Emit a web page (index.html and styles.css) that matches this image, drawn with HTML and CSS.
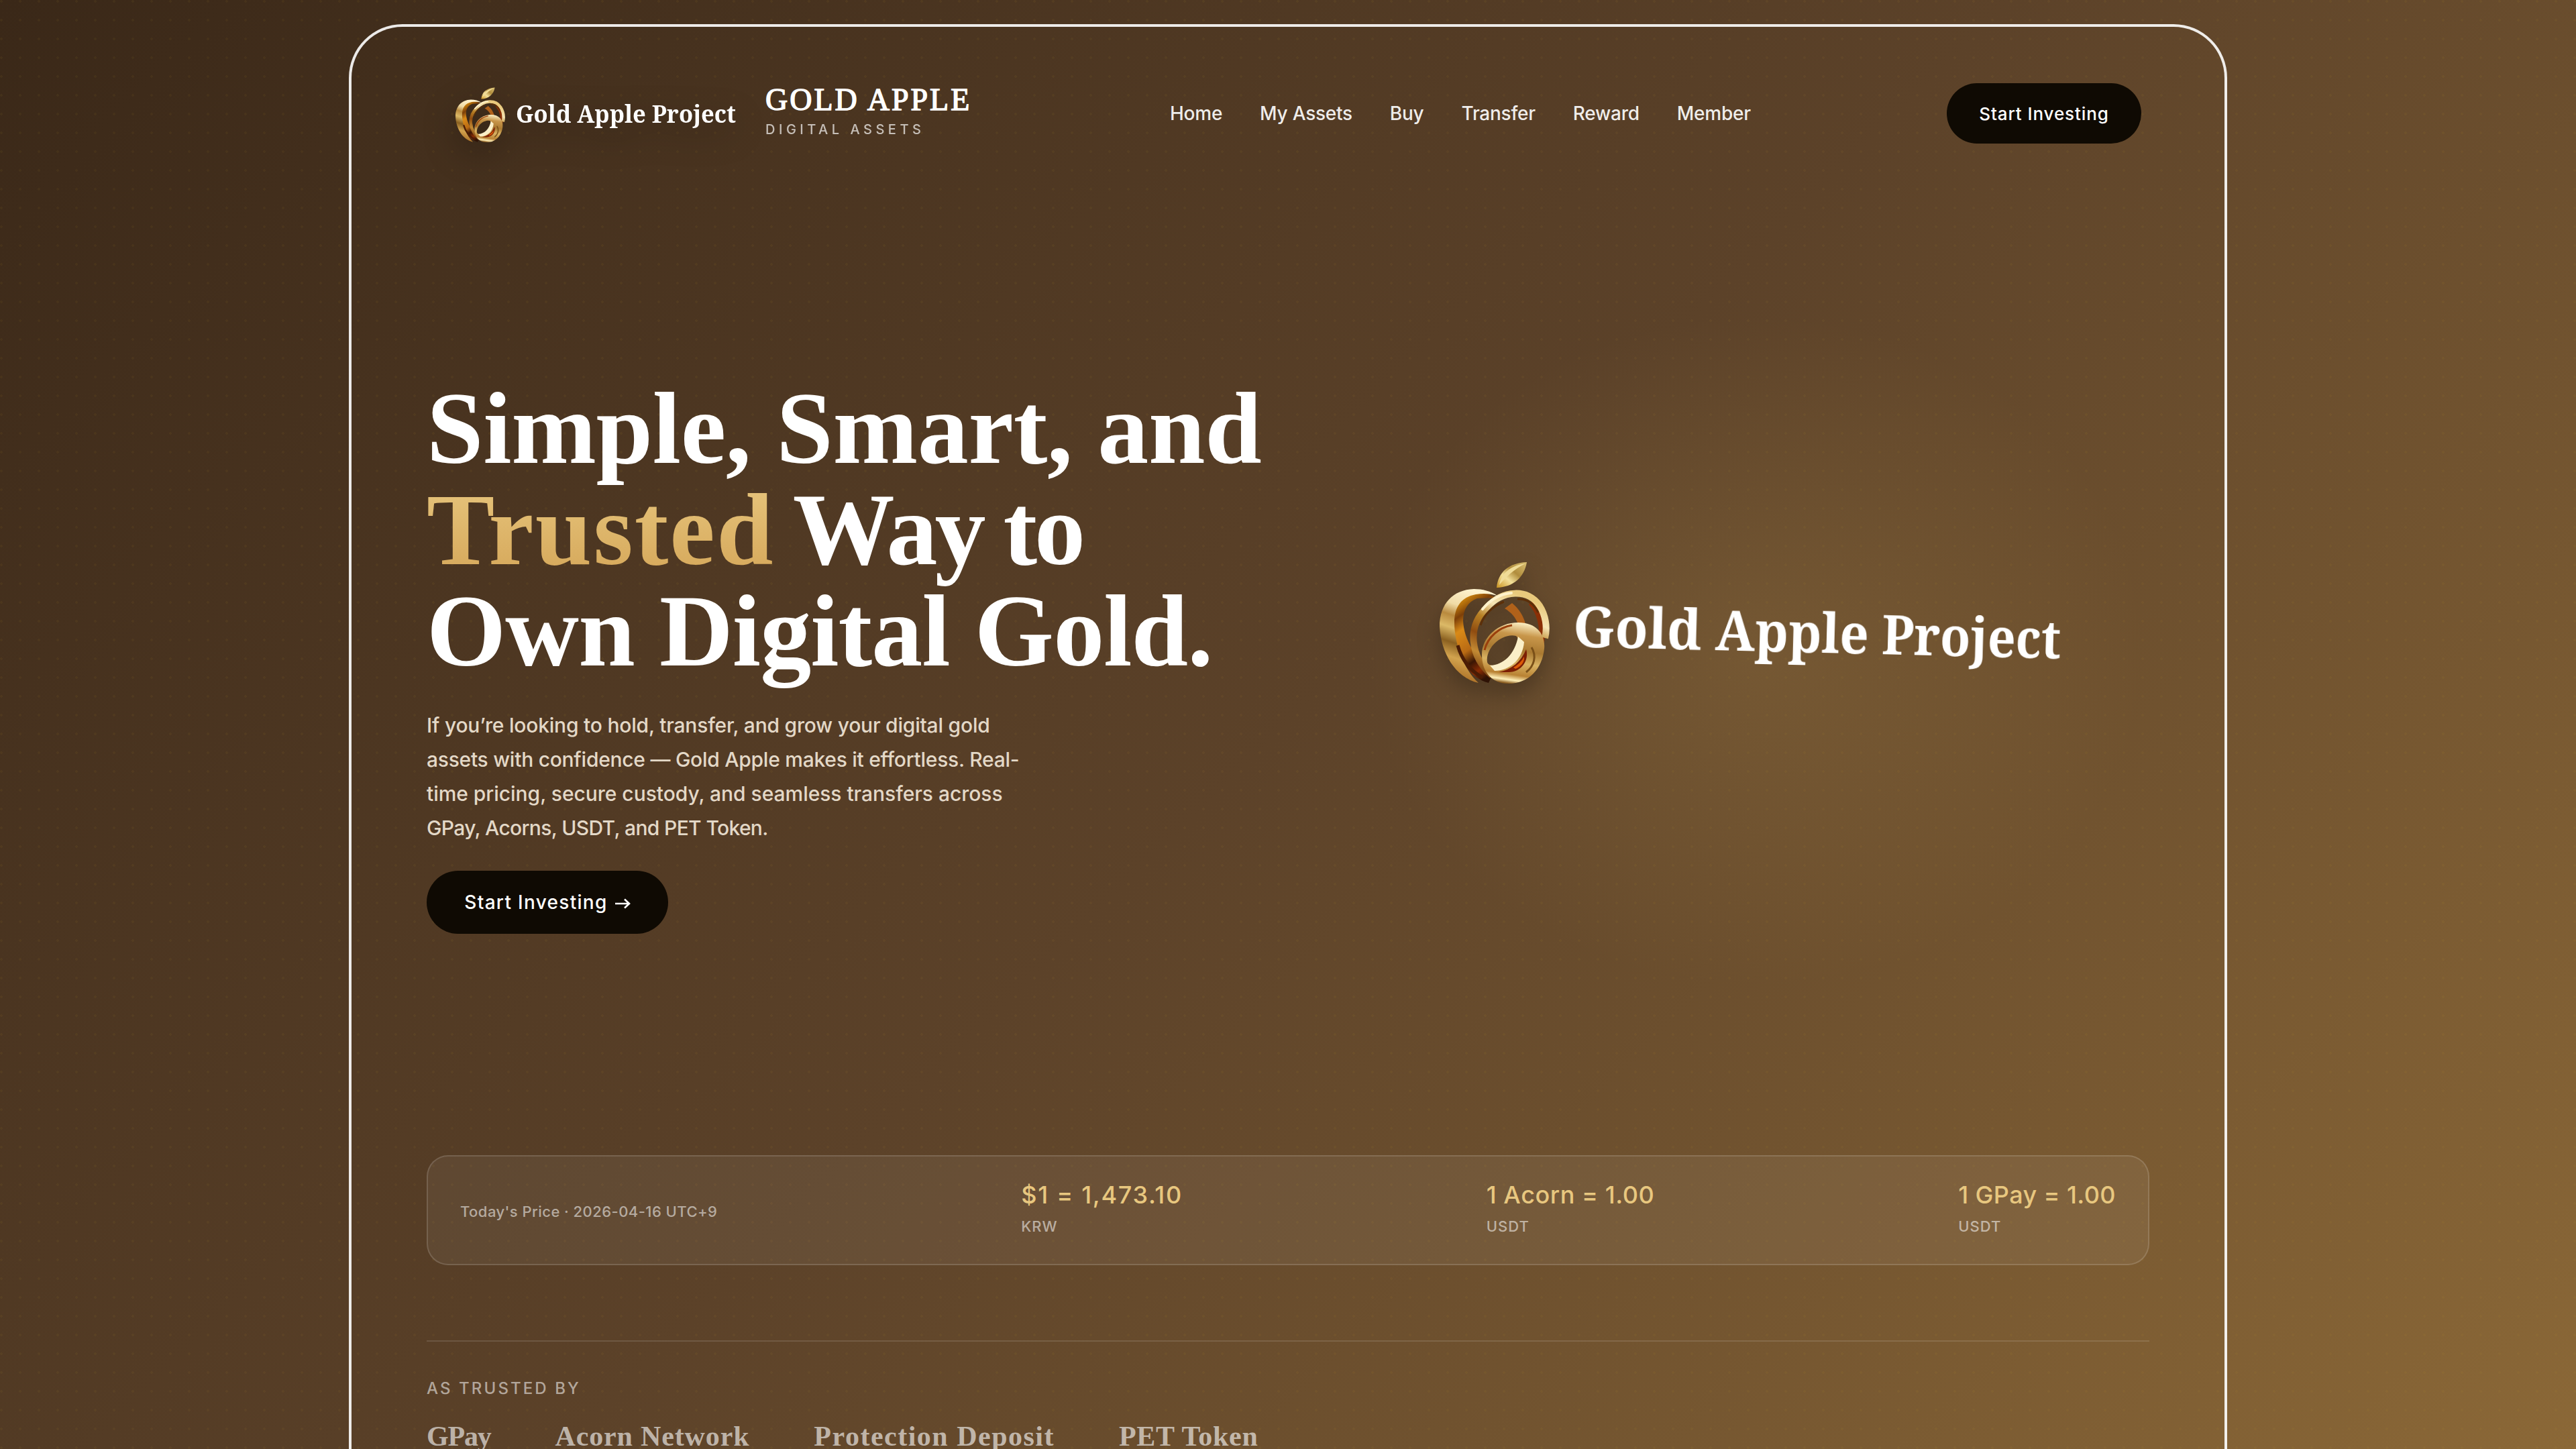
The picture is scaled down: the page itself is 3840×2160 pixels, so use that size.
FILE: index.html
```html
<!DOCTYPE html>
<html lang="en">
<head>
<meta charset="utf-8">
<title>Gold Apple</title>
<link rel="stylesheet" href="styles.css">
</head>
<body>
<svg width="0" height="0" class="defs" aria-hidden="true">
  <defs>
    <linearGradient id="goldLight" x1=".5" y1="0" x2=".3" y2="1">
      <stop offset="0" stop-color="#fff3cf"/><stop offset=".2" stop-color="#f0dba6"/><stop offset=".32" stop-color="#b98a3e"/>
      <stop offset=".45" stop-color="#dcb967"/><stop offset=".6" stop-color="#8a6020"/><stop offset=".75" stop-color="#d2a34e"/><stop offset="1" stop-color="#a5651d"/>
    </linearGradient>
    <linearGradient id="amber" x1=".3" y1="0" x2=".6" y2="1">
      <stop offset="0" stop-color="#e69a10"/><stop offset=".2" stop-color="#7c3f08"/><stop offset=".35" stop-color="#d98a17"/>
      <stop offset=".6" stop-color="#b86a14"/><stop offset=".75" stop-color="#3a1604"/><stop offset=".88" stop-color="#8a2c04"/><stop offset="1" stop-color="#2e1205"/>
    </linearGradient>
    <linearGradient id="hoop" x1=".6" y1="0" x2=".2" y2="1">
      <stop offset="0" stop-color="#e9c97c"/><stop offset=".22" stop-color="#f6e5b5"/><stop offset=".4" stop-color="#b88125"/>
      <stop offset=".6" stop-color="#8f4c10"/><stop offset=".8" stop-color="#c28a34"/><stop offset="1" stop-color="#7c4512"/>
    </linearGradient>
    <linearGradient id="ring" x1=".6" y1="0" x2=".45" y2="1">
      <stop offset="0" stop-color="#fbeec2"/><stop offset=".2" stop-color="#c8964a"/><stop offset=".45" stop-color="#a97931"/>
      <stop offset=".65" stop-color="#d9b363"/><stop offset=".85" stop-color="#b98233"/><stop offset=".94" stop-color="#fff0b8"/><stop offset="1" stop-color="#8a5a1c"/>
    </linearGradient>
    <linearGradient id="leaf" x1="1" y1="0" x2="0" y2="1">
      <stop offset="0" stop-color="#d9bf72"/><stop offset=".4" stop-color="#b08c3c"/><stop offset=".65" stop-color="#f3e09a"/><stop offset="1" stop-color="#c9921f"/>
    </linearGradient>
    <symbol id="apple" viewBox="0 0 166 184">
      <path fill="url(#leaf)" d="M132 1C128 24 112 38 87 39C89 16 105 2 132 1Z"/>
      <path fill="#f0dc98" d="M130 3C108 6 94 17 91 35C100 24 112 12 130 3Z"/>
      <path fill="url(#amber)" d="M40 50C26 60 21 82 24 110C28 145 48 174 75 181L82 166C56 146 38 116 37 88C37 72 44 60 58 55L84 54C74 45 54 43 40 50Z"/>
      <path fill="url(#goldLight)" d="M88 51C78 44 66 41 53 41C22 42 2 63 2 97C4 136 25 173 60 181C38 161 24 122 24 91C24 68 34 53 56 49C68 47 78 48 88 51Z"/>
      <path fill="none" stroke="#4a1c05" stroke-width="5" d="M29 125C35 147 48 163 66 173"/>
      <path fill="none" stroke="#8a2f06" stroke-width="9" d="M138 61C151 74 158 98 153 122"/>
      <path fill="#b0611a" d="M99 70L110 62C120 70 127 81 130 93L119 94C116 84 109 76 99 70Z"/>
      <path fill="none" stroke="url(#hoop)" stroke-width="10" d="M80 170C48 142 42 98 72 69C96 42 134 40 151 66C160 80 163 98 159 114"/>
      <path fill="none" stroke="#5c2f08" stroke-width="3" d="M63 95C68 79 82 66 98 60M118 56C132 55 142 62 149 76"/>
      <path fill="none" stroke="#fff2cb" stroke-width="4" stroke-linecap="round" d="M66 71C78 56 94 48 109 47"/>
      <path fill="url(#ring)" fill-rule="evenodd" d="M65 139C65 112 90 91 119 91C146 91 160 108 158 130C155 160 135 182 105 182C80 182 65 165 65 139ZM73 150C75 157 87 156 98 150C116 140 125 118 116 111C96 106 70 128 73 150Z"/>
      <path fill="none" stroke="#9a3f0c" stroke-width="3" d="M69 132C74 112 91 98 110 95"/>
      <path fill="#fbefc8" d="M77 155C98 154 114 138 119 112L128 120C126 146 106 163 84 163Z"/>
      <path fill="#7c1f04" d="M90 165C109 161 123 150 131 131C136 147 124 165 105 165Z"/>
      <path fill="#dd5a08" d="M112 158C119 154 124 149 128 142C129 150 123 157 115 160Z"/>
      <path fill="none" stroke="#7a5018" stroke-width="3" d="M139 128C147 141 143 156 131 165"/>
    </symbol>
  </defs>
</svg>
<div class="frame">
  <header class="header">
    <div class="brand">
      <div class="logo">
        <svg class="logo-mark"><use href="#apple"/></svg>
        <svg class="logo-text" viewBox="0 0 330 60"><text x="1" y="44" textLength="328" lengthAdjust="spacingAndGlyphs">Gold Apple Project</text></svg>
      </div>
      <div class="brand-copy">
        <div class="brand-name">GOLD APPLE</div>
        <div class="brand-sub">DIGITAL ASSETS</div>
      </div>
    </div>
    <nav class="nav">
      <a>Home</a><a>My Assets</a><a>Buy</a><a>Transfer</a><a>Reward</a><a>Member</a>
    </nav>
    <a class="btn btn-top">Start Investing</a>
  </header>

  <main class="hero">
    <div class="copy">
      <h1 class="title"><span class="t1">Simple, Smart, and</span><span class="t2"><em>Trusted</em> Way to</span><span class="t3">Own Digital Gold.</span></h1>
      <p class="lead"><span class="l1">If you’re looking to hold, transfer, and grow your digital gold</span><span class="l2">assets with confidence — Gold Apple makes it effortless. Real-</span><span class="l3">time pricing, secure custody, and seamless transfers across</span><span class="l4">GPay, Acorns, USDT, and PET Token.</span></p>
      <a class="btn btn-main">Start Investing <svg class="arrow" viewBox="0 0 24 16"><path d="M1 8H22M15 1.5L22 8L15 14.5"/></svg></a>
    </div>
    <div class="art">
      <div class="art-logo">
        <svg class="art-mark"><use href="#apple"/></svg>
        <svg class="art-text" viewBox="0 0 740 150"><text x="6" y="96" textLength="734" lengthAdjust="spacingAndGlyphs">Gold Apple Project</text></svg>
      </div>
    </div>
  </main>

  <section class="prices">
    <div class="price-date">Today's Price · 2026-04-16 UTC+9</div>
    <div class="price"><div class="value v1">$1 = 1,473.10</div><div class="unit">KRW</div></div>
    <div class="price"><div class="value v2">1 Acorn = 1.00</div><div class="unit">USDT</div></div>
    <div class="price"><div class="value v3">1 GPay = 1.00</div><div class="unit">USDT</div></div>
  </section>

  <section class="trusted">
    <div class="trusted-label">AS TRUSTED BY</div>
    <div class="partners"><span class="p1">GPay</span><span class="p2">Acorn Network</span><span class="p3">Protection Deposit</span><span class="p4">PET Token</span></div>
  </section>
</div>
</body>
</html>
```
FILE: styles.css
```css
* { box-sizing: border-box; }
html, body { height: 100%; }
body {
  margin: 0;
  overflow: hidden;
  padding: 36px 520px 0;
  font-family: Inter, "Liberation Sans", sans-serif;
  font-weight: 500;
  color: #fff;
  background:
    radial-gradient(circle at 2px 2px, rgba(201, 162, 39, .06) 2px, transparent 2px) 0 0 / 28px 28px,
    linear-gradient(135deg, #3a2818 0%, #5c4229 50%, #8b6837 100%);
}
.defs { position: absolute; }
.frame {
  height: 2124px;
  overflow: hidden;
  border: 4px solid rgba(255, 255, 255, .9);
  border-bottom: 0;
  border-radius: 80px 80px 0 0;
  padding: 0 112px;
}
.header {
  height: 258px;
  display: flex;
  align-items: center;
  padding-right: 12px;
}
.brand { width: 1108px; display: flex; align-items: center; }
.logo {
  width: 505px;
  display: flex;
  align-items: center;
  padding-left: 42px;
  filter: drop-shadow(0 16px 24px rgba(0, 0, 0, .3));
}
.logo-mark { width: 75px; height: 83px; margin-top: 4px; }
.logo-text { width: 330px; height: 60px; margin-left: 15px; overflow: visible; }
.logo-text text { font: bold 37px "Noto Serif", "Liberation Serif", serif; fill: #fff; }
.brand-copy { margin-top: -10px; }
.brand-name {
  font: 46px/56px "Liberation Serif", serif;
  letter-spacing: 3px;
  white-space: nowrap;
  -webkit-text-stroke: 1.4px #fff;
}
.brand-sub { font-size: 20px; line-height: 28px; letter-spacing: 5.5px; opacity: .68; margin-top: 2px; }
.nav { width: 1158px; display: flex; gap: 56px; font-size: 28px; letter-spacing: -.25px; color: rgba(255, 255, 255, .92); white-space: nowrap; }
.btn {
  display: flex;
  align-items: center;
  justify-content: center;
  background: #0f0a03;
  border-radius: 50px;
  white-space: nowrap;
}
.btn-top { width: 290px; height: 90px; font-size: 26px; letter-spacing: .9px; }
.hero { height: 1424px; display: grid; grid-template-columns: 1314px 1fr; }
.copy { padding-top: 266px; }
.title { margin: 0; font: bold 152px/151px "Liberation Serif", serif; white-space: nowrap; }
.title span { display: block; }
.t1 { letter-spacing: -.3px; }
.t2 { letter-spacing: -4px; word-spacing: -4px; }
.t3 { letter-spacing: -.9px; }
.title em {
  font-style: normal;
  letter-spacing: 2.1px;
  background: linear-gradient(180deg, #e8c77f, #d4a557);
  -webkit-background-clip: text;
  background-clip: text;
  color: transparent;
}
.lead { margin: 39px 0 0; font-size: 30px; line-height: 51px; color: #e3d8c7; white-space: nowrap; }
.lead span { display: block; }
.l1 { letter-spacing: -.21px; }
.l2 { letter-spacing: -.26px; }
.l3 { letter-spacing: -.04px; }
.l4 { letter-spacing: -.65px; }
.btn-main { width: 360px; height: 94px; margin-top: 38px; font-size: 28px; letter-spacing: 1.3px; gap: 10px; }
.arrow { width: 24px; height: 16px; margin-top: 4px; fill: none; stroke: #fff; stroke-width: 2.6; }
.art {
  margin-bottom: 100px;
  padding: 509px 0 0 194px;
  background: radial-gradient(ellipse 580px 500px at 668px 672px, rgba(180, 145, 80, .2), rgba(180, 145, 80, .1) 50%, transparent);
}
.art-logo { display: flex; align-items: flex-start; }
.art-mark { width: 166px; height: 184px; margin-top: 30px; flex: none; filter: drop-shadow(0 16px 16px rgba(0, 0, 0, .25)); }
.art-text { width: 740px; height: 150px; margin: 70px 0 0 37px; transform: perspective(1600px) rotate(1.5deg) rotateY(8deg); overflow: visible; flex: none; }
.art-text text { font: bold 82px "Noto Serif", "Liberation Serif", serif; fill: #fff; }
.prices {
  height: 164px;
  border: 2px solid rgba(255, 255, 255, .14);
  border-radius: 32px;
  background: rgba(255, 255, 255, .06);
  padding: 0 48px;
  display: flex;
  justify-content: space-between;
  align-items: center;
  white-space: nowrap;
}
.price-date { font-size: 22px; letter-spacing: .45px; padding-top: 4px; color: rgba(255, 255, 255, .55); }
.price { padding-bottom: 9px; }
.value { font-size: 36px; line-height: 50px; color: #e8c77f; }
.v1 { letter-spacing: 1.7px; }
.v2 { letter-spacing: .55px; }
.v3 { letter-spacing: .4px; }
.unit { font-size: 22px; line-height: 30px; margin-top: 7px; letter-spacing: 1px; color: rgba(255, 255, 255, .55); }
.trusted { margin-top: 112px; border-top: 2px solid rgba(255, 255, 255, .12); padding-top: 54px; }
.trusted-label { font-size: 24px; line-height: 32px; letter-spacing: 3.1px; color: rgba(255, 255, 255, .55); }
.partners { display: flex; margin-top: 30px; gap: 96px; font: bold 42px/50px "Liberation Serif", serif; color: rgba(255, 255, 255, .6); white-space: nowrap; }
.p1 { letter-spacing: -1.2px; }
.p2 { letter-spacing: .85px; }
.p3 { letter-spacing: 1.5px; }
.p4 { letter-spacing: .7px; }
```
